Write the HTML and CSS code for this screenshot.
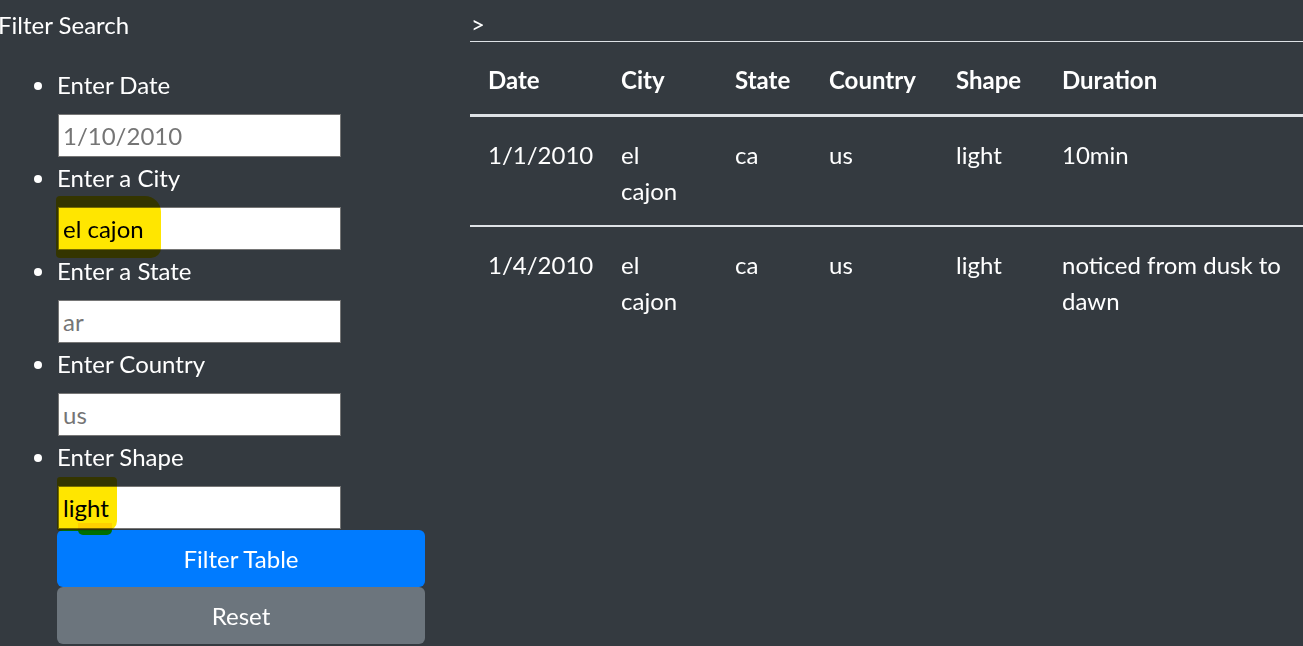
FILE: index.html
```html
<!doctype html>
<html>
<head>
<meta charset="utf-8">
<link rel="stylesheet" href="styles.css">
<title>UFO Sightings</title>
</head>
<body>
<div class="page">
  <div class="side">
    <div class="side-title">Filter Search</div>
    <ul class="filters">
      <li>
        <label>Enter Date</label>
        <div class="field"><span class="ph">1/10/2010</span></div>
      </li>
      <li>
        <label>Enter a City</label>
        <div class="field">el cajon<span class="mark mark-city"></span></div>
      </li>
      <li>
        <label>Enter a State</label>
        <div class="field"><span class="ph">ar</span></div>
      </li>
      <li>
        <label>Enter Country</label>
        <div class="field"><span class="ph">us</span></div>
      </li>
      <li>
        <label>Enter Shape</label>
        <div class="field">light<span class="mark mark-shape"></span><span class="mark mark-tail"></span></div>
      </li>
    </ul>
    <div class="actions">
      <button class="btn btn-primary">Filter Table</button>
      <button class="btn btn-secondary">Reset</button>
    </div>
  </div>

  <div class="main">
    <div class="stray">&gt;</div>
    <table class="results">
      <colgroup>
        <col style="width:133px">
        <col style="width:114px">
        <col style="width:94px">
        <col style="width:127px">
        <col style="width:106px">
        <col>
      </colgroup>
      <thead>
        <tr>
          <th>Date</th>
          <th>City</th>
          <th>State</th>
          <th>Country</th>
          <th>Shape</th>
          <th>Duration</th>
        </tr>
      </thead>
      <tbody>
        <tr>
          <td>1/1/2010</td>
          <td>el cajon</td>
          <td>ca</td>
          <td>us</td>
          <td>light</td>
          <td>10min</td>
        </tr>
        <tr>
          <td>1/4/2010</td>
          <td>el cajon</td>
          <td>ca</td>
          <td>us</td>
          <td>light</td>
          <td>noticed from dusk to dawn</td>
        </tr>
      </tbody>
    </table>
  </div>
</div>
</body>
</html>
```

FILE: styles.css
```css
html,
body {
    margin: 0;
    padding: 0;
}
body {
    font-family: Lato, "Open Sans", Arial, sans-serif;
    font-size: 24px;
    line-height: 36px;
    color: #fff;
    background-color: #343a40;
    overflow: hidden;
}
.page {
    display: flex;
    align-items: flex-start;
}

/* left column */
.side {
    width: 472px;
    margin-left: -2px;
    flex-shrink: 0;
}
.side-title {
    padding-top: 7px;
    margin-bottom: 24px;
}
.filters {
    margin: 0;
    padding: 0 0 0 59px;
    list-style: disc;
}
.filters li {
    margin-bottom: 3px;
}
.filters li:last-child {
    margin-bottom: 1px;
}
.filters label {
    display: block;
    margin-bottom: 11px;
}
.field {
    position: relative;
    box-sizing: border-box;
    width: 283px;
    height: 43px;
    margin-left: 1px;
    padding: 3px 4px;
    line-height: 36px;
    background-color: #fff;
    border: 1px solid #767676;
    color: #000;
}
.ph {
    color: #757575;
}

/* highlighter marks */
.mark {
    position: absolute;
    background-color: #ffe600;
    mix-blend-mode: multiply;
}
.mark-city {
    left: -3px;
    top: -12px;
    width: 105px;
    height: 62px;
    border-radius: 4px 16px 10px 4px;
}
.mark-shape {
    left: -2px;
    top: -10px;
    width: 60px;
    height: 54px;
    border-radius: 3px 4px 10px 3px;
}
.mark-tail {
    left: 19px;
    top: 36px;
    width: 34px;
    height: 12px;
    border-radius: 0 0 5px 5px;
}

.actions {
    display: flex;
    flex-direction: column;
    padding-left: 59px;
}
.btn {
    width: 368px;
    height: 57px;
    border: 0;
    border-radius: 6px;
    font-family: inherit;
    font-size: 24px;
    line-height: 36px;
    color: #fff;
    cursor: pointer;
}
.btn-primary {
    background-color: #007bff;
}
.btn-secondary {
    background-color: #6c757d;
}

/* right column */
.main {
    flex: 1;
    min-width: 0;
}
.stray {
    padding-top: 7px;
    padding-left: 1px;
    line-height: 34px;
}
.results {
    width: 833px;
    table-layout: fixed;
    border-collapse: collapse;
    color: #fff;
}
.results th,
.results td {
    padding: 20px 18px 16px;
    text-align: left;
    vertical-align: top;
}
.results th {
    font-weight: bold;
    vertical-align: bottom;
    border-top: 1px solid #dee2e6;
    border-bottom: 3px solid #dee2e6;
}
.results td {
    border-top: 2px solid #dee2e6;
}
.results tbody tr:first-child td {
    border-top: 0;
}
```
